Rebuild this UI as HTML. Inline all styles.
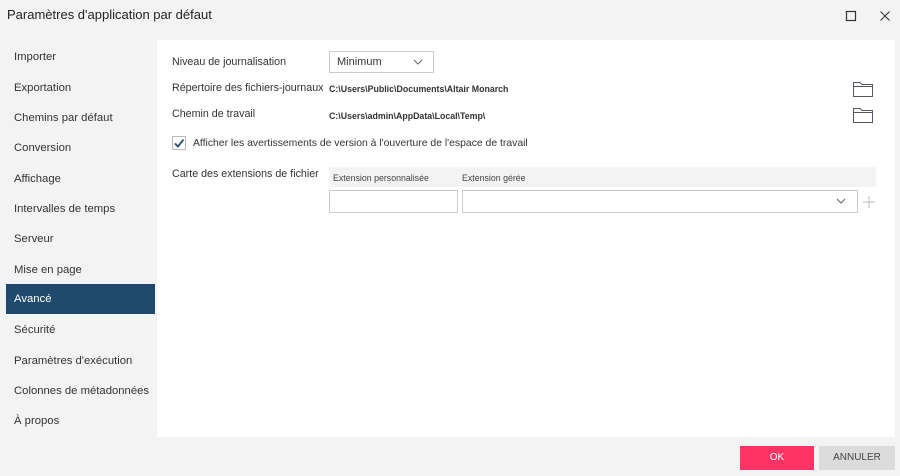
<!DOCTYPE html>
<html><head><meta charset="utf-8"><style>
body{margin:0;width:900px;height:476px;background:#f3f3f3;font-family:"Liberation Sans",sans-serif;position:relative;overflow:hidden;color:#333}
.a{position:absolute;white-space:nowrap}
.title{left:7px;top:7px;font-size:13px;color:#222}
.nav{left:6px;width:149px;height:30px;line-height:30px;font-size:11.3px;padding-left:8px;box-sizing:border-box;color:#333}
.sel{background:#1f4a6e;color:#fff}
.panel{left:157px;top:40px;width:738px;height:397px;background:#fff}
.lbl{font-size:10.7px;color:#333}
.path{font-size:8.8px;font-weight:bold;color:#333}
.btn{font-size:10px;text-align:center;line-height:24px;height:24px;top:446px}
</style></head><body>
<div class="a title">Paramètres d'application par défaut</div>
<svg class="a" style="left:845px;top:10px" width="12" height="12"><rect x="1.5" y="1.5" width="9" height="9" fill="none" stroke="#333" stroke-width="1.2"/></svg>
<svg class="a" style="left:879px;top:10px" width="12" height="12"><path d="M1.5 1.5L10.5 10.5M10.5 1.5L1.5 10.5" stroke="#333" stroke-width="1.1"/></svg>

<div class="a nav" style="top:42px">Importer</div>
<div class="a nav" style="top:73px">Exportation</div>
<div class="a nav" style="top:103px">Chemins par défaut</div>
<div class="a nav" style="top:133px">Conversion</div>
<div class="a nav" style="top:164px">Affichage</div>
<div class="a nav" style="top:194px">Intervalles de temps</div>
<div class="a nav" style="top:224px">Serveur</div>
<div class="a nav" style="top:255px">Mise en page</div>
<div class="a nav sel" style="top:284px">Avancé</div>
<div class="a nav" style="top:315px">Sécurité</div>
<div class="a nav" style="top:346px">Paramètres d'exécution</div>
<div class="a nav" style="top:376px">Colonnes de métadonnées</div>
<div class="a nav" style="top:406px">À propos</div>

<div class="a panel"></div>
<div class="a lbl" style="left:172px;top:56px">Niveau de journalisation</div>
<div class="a" style="left:329px;top:51px;width:105px;height:22px;border:1px solid #ccc;box-sizing:border-box;font-size:11px;line-height:20px;padding-left:7px">Minimum</div>
<svg class="a" style="left:413px;top:58px" width="10" height="8"><path d="M1 2L5 6L9 2" fill="none" stroke="#666" stroke-width="1"/></svg>
<div class="a lbl" style="left:172px;top:82px">Répertoire des fichiers-journaux</div>
<div class="a path" style="left:329px;top:84px">C:\Users\Public\Documents\Altair Monarch</div>
<div class="a lbl" style="left:172px;top:108px">Chemin de travail</div>
<div class="a path" style="left:329px;top:111px">C:\Users\admin\AppData\Local\Temp\</div>
<svg class="a" style="left:852px;top:80px" width="22" height="18"><path d="M1.5 2.5H8L10 4.5H20.5V16.5H1.5Z M1.5 6.5H20.5" fill="none" stroke="#556" stroke-width="1"/></svg>
<svg class="a" style="left:852px;top:106px" width="22" height="18"><path d="M1.5 2.5H8L10 4.5H20.5V16.5H1.5Z M1.5 6.5H20.5" fill="none" stroke="#556" stroke-width="1"/></svg>
<div class="a" style="left:172px;top:136px;width:14px;height:14px;border:1px solid #bbb;box-sizing:border-box"></div>
<svg class="a" style="left:173px;top:137px" width="12" height="12"><path d="M2 6.5L5 9.5L10.5 2.5" fill="none" stroke="#1f4a6e" stroke-width="1.8"/></svg>
<div class="a lbl" style="left:193px;top:138px;font-size:10.4px">Afficher les avertissements de version à l'ouverture de l'espace de travail</div>
<div class="a lbl" style="left:172px;top:168px">Carte des extensions de fichier</div>
<div class="a" style="left:329px;top:167px;width:547px;height:20px;background:#f3f3f3"></div>
<div class="a" style="left:333px;top:173px;font-size:8.8px;color:#444">Extension personnalisée</div>
<div class="a" style="left:462px;top:173px;font-size:8.8px;color:#444">Extension gérée</div>
<div class="a" style="left:329px;top:190px;width:129px;height:23px;border:1px solid #ccc;box-sizing:border-box"></div>
<div class="a" style="left:462px;top:190px;width:396px;height:23px;border:1px solid #ccc;box-sizing:border-box"></div>
<svg class="a" style="left:836px;top:197px" width="10" height="8"><path d="M1 2L5 6L9 2" fill="none" stroke="#666" stroke-width="1"/></svg>
<svg class="a" style="left:863px;top:196px" width="12" height="12"><path d="M6 0V12M0 6H12" stroke="#bbb" stroke-width="1"/></svg>

<div class="a btn" style="left:740px;width:74px;background:#ff3366;color:#fff">OK</div>
<div class="a btn" style="left:819px;width:76px;background:#dcdcdc;color:#444">ANNULER</div>
</body></html>
